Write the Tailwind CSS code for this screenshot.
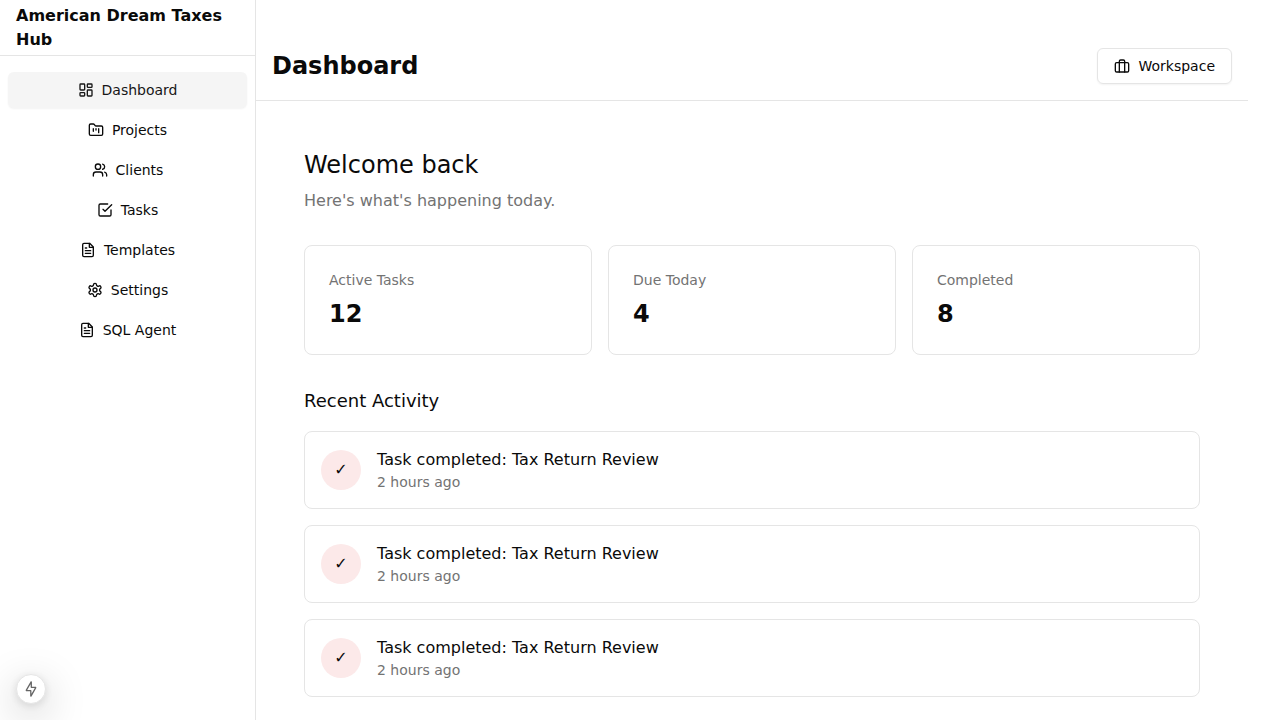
<!DOCTYPE html>
<html lang="en">
<head>
<meta charset="utf-8">
<title>American Dream Taxes Hub</title>
<script src="https://cdn.jsdelivr.net/npm/@tailwindcss/browser@4"></script>
</head>
<body class="h-screen overflow-hidden bg-white font-['DejaVu_Sans',sans-serif] text-[#0a0a0a]">
<svg class="hidden">
  <symbol id="file" viewBox="0 0 24 24"><path d="M14.5 2H6a2 2 0 0 0-2 2v16a2 2 0 0 0 2 2h12a2 2 0 0 0 2-2V7.5L14.5 2z"/><path d="M14 2v6h6"/><path d="M16 13H8"/><path d="M16 17H8"/><path d="M10 9H8"/></symbol>
</svg>
<div class="flex h-full">
  <aside class="flex w-64 shrink-0 flex-col border-r border-[#e5e5e5]">
    <div class="flex h-14 shrink-0 items-center border-b border-[#e5e5e5] px-4">
      <h2 class="text-base font-bold">American Dream Taxes Hub</h2>
    </div>
    <nav class="flex flex-col gap-1 px-2 py-4 text-sm">
      <a class="flex h-9 items-center justify-center gap-2 rounded-md bg-[#f5f5f5] text-[#171717] shadow-xs">
        <svg class="size-4" viewBox="0 0 24 24" fill="none" stroke="currentColor" stroke-width="2" stroke-linecap="round" stroke-linejoin="round"><rect width="7" height="9" x="3" y="3" rx="1"/><rect width="7" height="5" x="14" y="3" rx="1"/><rect width="7" height="9" x="14" y="12" rx="1"/><rect width="7" height="5" x="3" y="16" rx="1"/></svg>
        Dashboard</a>
      <a class="flex h-9 items-center justify-center gap-2">
        <svg class="size-4" viewBox="0 0 24 24" fill="none" stroke="currentColor" stroke-width="2" stroke-linecap="round" stroke-linejoin="round"><path d="M4 20h16a2 2 0 0 0 2-2V8a2 2 0 0 0-2-2h-7.93a2 2 0 0 1-1.66-.9l-.82-1.2A2 2 0 0 0 7.93 3H4a2 2 0 0 0-2 2v13c0 1.1.9 2 2 2Z"/><path d="M8 10v4"/><path d="M12 10v2"/><path d="M16 10v6"/></svg>
        Projects</a>
      <a class="flex h-9 items-center justify-center gap-2">
        <svg class="size-4" viewBox="0 0 24 24" fill="none" stroke="currentColor" stroke-width="2" stroke-linecap="round" stroke-linejoin="round"><path d="M16 21v-2a4 4 0 0 0-4-4H6a4 4 0 0 0-4 4v2"/><circle cx="9" cy="7" r="4"/><path d="M22 21v-2a4 4 0 0 0-3-3.87"/><path d="M16 3.13a4 4 0 0 1 0 7.75"/></svg>
        Clients</a>
      <a class="flex h-9 items-center justify-center gap-2">
        <svg class="size-4" viewBox="0 0 24 24" fill="none" stroke="currentColor" stroke-width="2" stroke-linecap="round" stroke-linejoin="round"><path d="m9 11 3 3L22 4"/><path d="M21 12v7a2 2 0 0 1-2 2H5a2 2 0 0 1-2-2V5a2 2 0 0 1 2-2h11"/></svg>
        Tasks</a>
      <a class="flex h-9 items-center justify-center gap-2">
        <svg class="size-4" viewBox="0 0 24 24" fill="none" stroke="currentColor" stroke-width="2" stroke-linecap="round" stroke-linejoin="round"><use href="#file"/></svg>
        Templates</a>
      <a class="flex h-9 items-center justify-center gap-2">
        <svg class="size-4" viewBox="0 0 24 24" fill="none" stroke="currentColor" stroke-width="2" stroke-linecap="round" stroke-linejoin="round"><path d="M12.22 2h-.44a2 2 0 0 0-2 2v.18a2 2 0 0 1-1 1.73l-.43.25a2 2 0 0 1-2 0l-.15-.08a2 2 0 0 0-2.73.73l-.22.38a2 2 0 0 0 .73 2.73l.15.1a2 2 0 0 1 1 1.72v.51a2 2 0 0 1-1 1.74l-.15.09a2 2 0 0 0-.73 2.73l.22.38a2 2 0 0 0 2.73.73l.15-.08a2 2 0 0 1 2 0l.43.25a2 2 0 0 1 1 1.73V20a2 2 0 0 0 2 2h.44a2 2 0 0 0 2-2v-.18a2 2 0 0 1 1-1.73l.43-.25a2 2 0 0 1 2 0l.15.08a2 2 0 0 0 2.73-.73l.22-.39a2 2 0 0 0-.73-2.73l-.15-.08a2 2 0 0 1-1-1.74v-.5a2 2 0 0 1 1-1.74l.15-.09a2 2 0 0 0 .73-2.73l-.22-.38a2 2 0 0 0-2.73-.73l-.15.08a2 2 0 0 1-2 0l-.43-.25a2 2 0 0 1-1-1.73V4a2 2 0 0 0-2-2z"/><circle cx="12" cy="12" r="3"/></svg>
        Settings</a>
      <a class="flex h-9 items-center justify-center gap-2">
        <svg class="size-4" viewBox="0 0 24 24" fill="none" stroke="currentColor" stroke-width="2" stroke-linecap="round" stroke-linejoin="round"><use href="#file"/></svg>
        SQL Agent</a>
    </nav>
  </aside>
  <main class="flex-1 pt-8 pr-8">
    <header class="flex items-center justify-between border-b border-[#e5e5e5] p-4">
      <h1 class="text-2xl font-bold">Dashboard</h1>
      <button class="flex h-9 items-center gap-2 rounded-md border border-[#e5e5e5] px-4 text-sm shadow-xs">
        <svg class="size-4" viewBox="0 0 24 24" fill="none" stroke="currentColor" stroke-width="2" stroke-linecap="round" stroke-linejoin="round"><rect width="20" height="14" x="2" y="7" rx="2"/><path d="M16 21V5a2 2 0 0 0-2-2h-4a2 2 0 0 0-2 2v16"/></svg>
        Workspace
      </button>
    </header>
    <div class="flex flex-col gap-8 p-12">
      <section>
        <h2 class="text-2xl">Welcome back</h2>
        <p class="mt-2 text-[#737373]">Here's what's happening today.</p>
      </section>
      <section class="grid grid-cols-3 gap-4">
        <div class="rounded-lg border border-[#e5e5e5] p-6"><h3 class="text-sm text-[#737373]">Active Tasks</h3><p class="mt-2 text-2xl font-bold">12</p></div>
        <div class="rounded-lg border border-[#e5e5e5] p-6"><h3 class="text-sm text-[#737373]">Due Today</h3><p class="mt-2 text-2xl font-bold">4</p></div>
        <div class="rounded-lg border border-[#e5e5e5] p-6"><h3 class="text-sm text-[#737373]">Completed</h3><p class="mt-2 text-2xl font-bold">8</p></div>
      </section>
      <section class="flex flex-col gap-4">
        <h3 class="text-lg">Recent Activity</h3>
        <div class="flex items-center gap-4 rounded-lg border border-[#e5e5e5] p-4">
          <div class="flex size-10 items-center justify-center rounded-full bg-[#fce9e9]">✓</div>
          <div><p>Task completed: Tax Return Review</p><p class="text-sm text-[#737373]">2 hours ago</p></div>
        </div>
        <div class="flex items-center gap-4 rounded-lg border border-[#e5e5e5] p-4">
          <div class="flex size-10 items-center justify-center rounded-full bg-[#fce9e9]">✓</div>
          <div><p>Task completed: Tax Return Review</p><p class="text-sm text-[#737373]">2 hours ago</p></div>
        </div>
        <div class="flex items-center gap-4 rounded-lg border border-[#e5e5e5] p-4">
          <div class="flex size-10 items-center justify-center rounded-full bg-[#fce9e9]">✓</div>
          <div><p>Task completed: Tax Return Review</p><p class="text-sm text-[#737373]">2 hours ago</p></div>
        </div>
      </section>
    </div>
  </main>
</div>
<div class="fixed bottom-4 left-4 flex size-[30px] items-center justify-center rounded-full border border-[#e5e5e5] bg-white text-[#666] shadow-[0_11px_40px_0_rgba(0,0,0,0.25),0_2px_10px_0_rgba(0,0,0,0.12)]">
  <svg class="size-4 overflow-visible" viewBox="0 0 16 16" fill="none" stroke="currentColor" stroke-width="1.3" stroke-linejoin="bevel"><path d="M8.3 .6v5.8h4.6L7.8 15.4V9.6H3.1Z"/></svg>
</div>
</body>
</html>
